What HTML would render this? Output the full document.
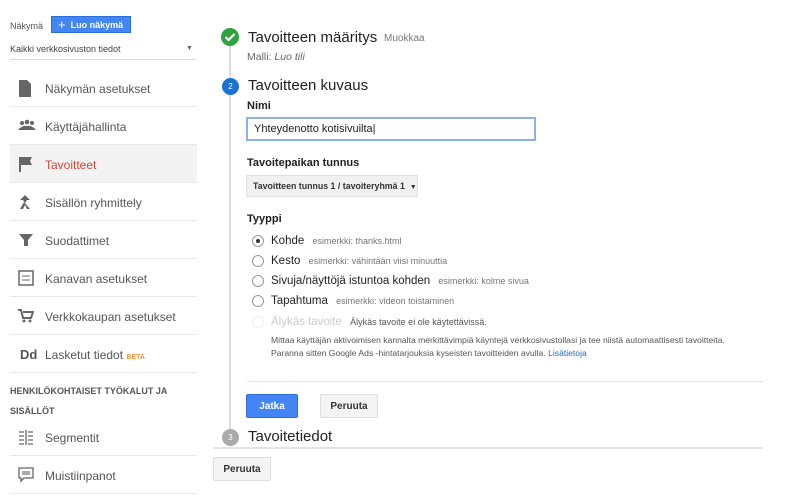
<!DOCTYPE html>
<html><head><meta charset="utf-8"><style>
*{margin:0;padding:0;box-sizing:border-box}
body{width:800px;height:500px;background:#fff;font-family:"Liberation Sans",sans-serif;color:#212121;position:relative;overflow:hidden}
.a{position:absolute;white-space:nowrap}
.item{position:absolute;left:10px;width:187px;height:38px;border-bottom:1px solid #e8e8e8;font-size:12px;color:#555}
.item span{position:absolute;left:35px;top:13px}
.item svg{position:absolute;left:8px;top:11px}
.radio{position:absolute;left:252px;width:12px;height:12px;border:1px solid #999;border-radius:50%}
.rl{font-size:11.5px;color:#222}
.ex{font-size:9px;color:#777}
.btn{position:absolute;font-size:10px;font-weight:bold;text-align:center;line-height:23px;border-radius:2px}
</style></head><body>
<div class="a" style="left:10px;top:21px;font-size:9px;color:#555">Näkymä</div>
<div class="a" style="left:51px;top:16px;width:80px;height:17px;background:#4285f4;border:1px solid #2a6fd8;color:#fff;font-size:9px;font-weight:bold;line-height:15px;padding-left:6px;overflow:hidden"><span style="font-size:13px;font-weight:normal;vertical-align:-1px">+</span>&nbsp; Luo näkymä</div>
<div class="a" style="left:10px;top:44px;font-size:9px;color:#444">Kaikki verkkosivuston tiedot</div>
<div class="a" style="left:186px;top:45px;font-size:7px;color:#666">▼</div>
<div class="a" style="left:10px;top:59px;width:186px;height:1px;background:#ddd"></div>

<div class="item" style="top:69px"><svg width="14" height="17"><path d="M1 0h8l4 4v13H1z" fill="#666"/></svg><span>Näkymän asetukset</span></div>
<div class="item" style="top:107px"><svg width="18" height="14"><circle cx="4" cy="5" r="2" fill="#666"/><circle cx="9" cy="4" r="2.3" fill="#666"/><circle cx="14" cy="5" r="2" fill="#666"/><path d="M0 12q4-5 9-4q5-1 9 4z" fill="#666"/></svg><span>Käyttäjähallinta</span></div>
<div class="item" style="top:145px;background:#f3f3f3"><svg width="16" height="16"><path d="M1 1h2v15H1zM3 1h11l-2 4 2 4H3z" fill="#666"/></svg><span style="color:#db4437">Tavoitteet</span></div>
<div class="item" style="top:183px"><svg width="14" height="16"><path d="M7 1l5 5h-3l-2 3-2-3H2zM6 8l-4 7h3l2-4 2 4h3z" fill="#666"/></svg><span>Sisällön ryhmittely</span></div>
<div class="item" style="top:221px"><svg width="16" height="16"><path d="M1 2h14l-5 6v6H6V8z" fill="#666"/></svg><span>Suodattimet</span></div>
<div class="item" style="top:259px"><svg width="16" height="16"><rect x="1" y="1" width="14" height="14" fill="none" stroke="#666" stroke-width="1.5"/><path d="M4 6h8M4 10h8" stroke="#666"/></svg><span>Kanavan asetukset</span></div>
<div class="item" style="top:297px"><svg width="16" height="16"><path d="M0 2h3l2 8h8l2-6H5" fill="none" stroke="#666" stroke-width="2"/><circle cx="6" cy="13" r="1.5" fill="#666"/><circle cx="12" cy="13" r="1.5" fill="#666"/></svg><span>Verkkokaupan asetukset</span></div>
<div class="item" style="top:335px"><b style="position:absolute;left:10px;top:12px;font-size:13px;color:#555">Dd</b><span>Lasketut tiedot <b style="color:#f4903a;font-size:7px">BETA</b></span></div>
<div class="a" style="left:10px;top:386px;font-size:9px;font-weight:bold;color:#555">HENKILÖKOHTAISET TYÖKALUT JA</div>
<div class="a" style="left:10px;top:406px;font-size:9px;font-weight:bold;color:#555">SISÄLLÖT</div>
<div class="item" style="top:418px"><svg width="16" height="16"><path d="M1 3h5M1 7h5M1 11h5M1 15h5M10 3h5M10 7h5M10 11h5M10 15h5M8 1v15" stroke="#666" stroke-width="1.3"/></svg><span>Segmentit</span></div>
<div class="item" style="top:456px"><svg width="16" height="16"><path d="M1 1h14v10H6l-3 3v-3H1z" fill="none" stroke="#666" stroke-width="1.3"/><rect x="4" y="4" width="8" height="4" fill="#aaa"/></svg><span>Muistiinpanot</span></div>

<div class="a" style="left:229px;top:45px;width:2px;height:395px;background:#ddd"></div>
<div class="a" style="left:221px;top:28px;width:18px;height:18px;border-radius:50%;background:#2da43d"><svg width="18" height="18"><path d="M4.5 9l3 3 6-6" fill="none" stroke="#fff" stroke-width="2.2"/></svg></div>
<div class="a" style="left:248px;top:29px;font-size:15px">Tavoitteen määritys</div>
<div class="a" style="left:384px;top:33px;font-size:10px;color:#777">Muokkaa</div>
<div class="a" style="left:247px;top:51px;font-size:10.5px;color:#666">Malli: <i>Luo tili</i></div>
<div class="a" style="left:222px;top:78px;width:17px;height:17px;border-radius:50%;background:#1a73d2;color:#fff;font-size:8px;text-align:center;line-height:17px">2</div>
<div class="a" style="left:248px;top:77px;font-size:15px">Tavoitteen kuvaus</div>
<div class="a" style="left:247px;top:100px;font-size:11px;font-weight:bold">Nimi</div>
<div class="a" style="left:246px;top:117px;width:290px;height:24px;border:2px solid #8ab4e8;font-size:11px;padding:4px 6px">Yhteydenotto kotisivuilta|</div>
<div class="a" style="left:247px;top:157px;font-size:11px;font-weight:bold">Tavoitepaikan tunnus</div>
<div class="a" style="left:246px;top:175px;width:172px;height:22px;background:#f1f1f1;border:1px solid #e0e0e0;font-size:8.8px;font-weight:bold;color:#333;padding:5px 6px;overflow:hidden">Tavoitteen tunnus 1 / tavoiteryhmä 1 &nbsp;<span style="font-size:7px">▼</span></div>
<div class="a" style="left:247px;top:213px;font-size:11px;font-weight:bold">Tyyppi</div>
<div class="radio" style="top:235px"><div style="margin:3px;width:4px;height:4px;border-radius:50%;background:#333"></div></div>
<div class="a rl" style="left:271px;top:235px">Kohde <span class="ex">&nbsp;&nbsp;esimerkki: thanks.html</span></div>
<div class="radio" style="top:255px"></div>
<div class="a rl" style="left:271px;top:255px">Kesto <span class="ex">&nbsp;&nbsp;esimerkki: vähintään viisi minuuttia</span></div>
<div class="radio" style="top:275px"></div>
<div class="a rl" style="left:271px;top:275px">Sivuja/näyttöjä istuntoa kohden <span class="ex">&nbsp;&nbsp;esimerkki: kolme sivua</span></div>
<div class="radio" style="top:295px"></div>
<div class="a rl" style="left:271px;top:295px">Tapahtuma <span class="ex">&nbsp;&nbsp;esimerkki: videon toistaminen</span></div>
<div class="radio" style="top:316px;border-color:#eee"></div>
<div class="a rl" style="left:271px;top:316px;color:#ccc">Älykäs tavoite <span class="ex" style="color:#555">&nbsp;&nbsp;Älykäs tavoite ei ole käytettävissä.</span></div>
<div class="a" style="left:271px;top:334px;font-size:8.6px;color:#555;line-height:12.5px">Mittaa käyttäjän aktivoimisen kannalta merkittävimpiä käyntejä verkkosivustollasi ja tee niistä automaattisesti tavoitteita.<br>Paranna sitten Google Ads -hintatarjouksia kyseisten tavoitteiden avulla. <span style="color:#1a6bc4">Lisätietoja</span></div>
<div class="a" style="left:247px;top:381px;width:516px;height:1px;background:#e3e3e3"></div>
<div class="btn" style="left:246px;top:394px;width:52px;height:24px;background:#4285f4;border:1px solid #2d6fd6;color:#fff">Jatka</div>
<div class="btn" style="left:320px;top:394px;width:58px;height:24px;background:#f4f4f4;border:1px solid #ddd;color:#333">Peruuta</div>
<div class="a" style="left:222px;top:429px;width:17px;height:17px;border-radius:50%;background:#aaa;color:#fff;font-size:8px;text-align:center;line-height:17px">3</div>
<div class="a" style="left:248px;top:428px;font-size:15px">Tavoitetiedot</div>
<div class="a" style="left:213px;top:447px;width:550px;height:2px;background:#e3e3e3"></div>
<div class="btn" style="left:213px;top:457px;width:58px;height:24px;background:#f4f4f4;border:1px solid #ddd;color:#333">Peruuta</div>
</body></html>
